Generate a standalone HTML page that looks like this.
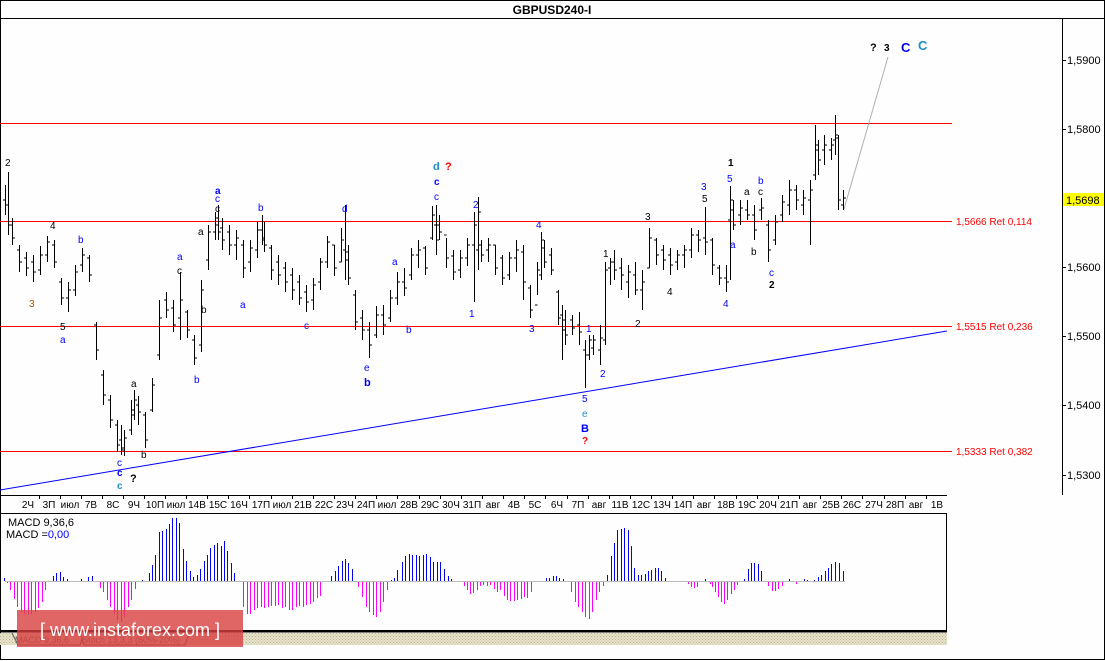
<!DOCTYPE html>
<html><head><meta charset="utf-8">
<style>
html,body{margin:0;padding:0;background:#fff;}
svg{display:block;font-family:"Liberation Sans","DejaVu Sans",sans-serif;}
text{font-size:10px;}
</style></head>
<body>
<svg width="1105" height="661" viewBox="0 0 1105 661" xmlns="http://www.w3.org/2000/svg">
<defs>
<pattern id="hatch" width="3" height="3" patternUnits="userSpaceOnUse">
<rect width="3" height="3" fill="#e6e2c8"/><rect width="1" height="1" fill="#b8b49a"/><rect x="1.5" y="1.5" width="1" height="1" fill="#c8c4aa"/>
</pattern>
</defs>
<rect x="0" y="0" width="1105" height="661" fill="#fff"/>
<rect x="0.5" y="0.5" width="1104" height="659" fill="#fefefe" stroke="#000"/>
<line x1="0" y1="18.5" x2="1105" y2="18.5" stroke="#000"/>
<text x="552" y="14" text-anchor="middle" style="font-size:12px;font-weight:bold" fill="#000">GBPUSD240-I</text>
<line x1="1062.5" y1="18" x2="1062.5" y2="495" stroke="#000"/>
<g stroke="#000">
<line x1="1062" y1="60.5" x2="1066" y2="60.5"/><line x1="1062" y1="129.5" x2="1066" y2="129.5"/><line x1="1062" y1="267.5" x2="1066" y2="267.5"/><line x1="1062" y1="336.5" x2="1066" y2="336.5"/><line x1="1062" y1="405.5" x2="1066" y2="405.5"/><line x1="1062" y1="475.5" x2="1066" y2="475.5"/>
</g>
<g fill="#000" style="font-size:11px">
<text x="1067" y="64" style="font-size:11px">1,5900</text>
<text x="1067" y="133" style="font-size:11px">1,5800</text>
<text x="1067" y="271" style="font-size:11px">1,5600</text>
<text x="1067" y="340" style="font-size:11px">1,5500</text>
<text x="1067" y="409" style="font-size:11px">1,5400</text>
<text x="1067" y="479" style="font-size:11px">1,5300</text>
</g>
<rect x="1063" y="193" width="41" height="13" fill="#ffff00"/>
<text x="1066" y="204" style="font-size:11px" fill="#000">1,5698</text>
<g stroke="#ff0000" stroke-width="1">
<line x1="0" y1="123.5" x2="952" y2="123.5"/>
<line x1="0" y1="221.5" x2="952" y2="221.5"/>
<line x1="0" y1="326.5" x2="952" y2="326.5"/>
<line x1="0" y1="451.5" x2="952" y2="451.5"/>
</g>
<g fill="#ff0000">
<text x="956" y="225">1,5666 Ret 0,114</text>
<text x="956" y="330">1,5515 Ret 0,236</text>
<text x="956" y="455">1,5333 Ret 0,382</text>
</g>
<line x1="0" y1="490" x2="947" y2="331" stroke="#0000ff" stroke-width="1"/>
<line x1="844" y1="209" x2="888" y2="57" stroke="#b0b0b0" stroke-width="1"/>
<path stroke="#000" stroke-width="1" fill="none" d="
M5.5 185V215M3 200H5.5M5.5 205H8
M8.5 172V235M6 205H8.5M8.5 225H11
M12.5 218V245M10 225H12.5M12.5 238H15
M19.5 245V272M17 250H19.5M19.5 262H22
M26.5 252V276M24 258H26.5M26.5 268H29
M33.5 255V282M31 262H33.5M33.5 272H36
M40.5 246V275M38 270H40.5M40.5 255H43
M47.5 236V262M45 255H47.5M47.5 242H50
M54.5 240V268M52 245H54.5M54.5 262H57
M61.5 278V305M59 282H61.5M61.5 298H64
M68.5 282V312M66 298H68.5M68.5 290H71
M75.5 265V296M73 290H75.5M75.5 272H78
M82.5 248V272M80 265H82.5M82.5 255H85
M89.5 255V282M87 258H89.5M89.5 275H92
M96.5 322V360M94 325H96.5M96.5 350H99
M103.5 370V405M101 375H103.5M103.5 395H106
M110.5 395V428M108 400H110.5M110.5 420H113
M117.5 420V452M115 425H117.5M117.5 445H120
M121.5 425V455M119 440H121.5M121.5 448H124
M124.5 430V456M122 450H124.5M124.5 438H127
M131.5 400V435M129 430H131.5M131.5 410H134
M134.5 390V420M132 415H134.5M134.5 400H137
M138.5 396V425M136 405H138.5M138.5 412H141
M145.5 412V448M143 415H145.5M145.5 440H148
M152.5 378V412M150 410H152.5M152.5 385H155
M159.5 300V360M157 355H159.5M159.5 318H162
M166.5 292V318M164 300H166.5M166.5 310H169
M173.5 300V332M171 308H173.5M173.5 325H176
M180.5 272V340M178 318H180.5M180.5 300H183
M187.5 310V338M185 312H187.5M187.5 330H190
M194.5 335V365M192 340H194.5M194.5 358H197
M201.5 280V352M199 345H201.5M201.5 290H204
M208.5 225V270M206 260H208.5M208.5 232H211
M215.5 212V240M213 232H215.5M215.5 218H218
M218.5 205V240M216 225H218.5M218.5 232H221
M222.5 218V250M220 228H222.5M222.5 240H225
M229.5 225V255M227 232H229.5M229.5 245H232
M236.5 230V260M234 245H236.5M236.5 238H239
M243.5 240V278M241 245H243.5M243.5 268H246
M250.5 240V272M248 262H250.5M250.5 248H253
M257.5 222V258M255 250H257.5M257.5 230H260
M262.5 215V245M260 230H262.5M262.5 238H265
M264.5 222V252M262 240H264.5M264.5 245H267
M271.5 245V280M269 248H271.5M271.5 270H274
M278.5 255V285M276 262H278.5M278.5 275H281
M285.5 262V292M283 268H285.5M285.5 282H288
M292.5 268V300M290 275H292.5M292.5 290H295
M299.5 275V305M297 282H299.5M299.5 298H302
M306.5 285V312M304 292H306.5M306.5 302H309
M313.5 278V310M311 300H313.5M313.5 285H316
M320.5 258V290M318 282H320.5M320.5 262H323
M327.5 236V268M325 262H327.5M327.5 242H330
M334.5 245V276M332 245H334.5M334.5 268H337
M341.5 228V262M339 262H341.5M341.5 240H344
M345.5 205V280M343 250H345.5M345.5 260H348
M348.5 245V285M346 252H348.5M348.5 278H351
M355.5 290V330M353 295H355.5M355.5 322H358
M362.5 310V340M360 318H362.5M362.5 330H365
M369.5 322V358M367 330H369.5M369.5 345H372
M376.5 306V338M374 335H376.5M376.5 315H379
M383.5 305V335M381 315H383.5M383.5 325H386
M390.5 290V322M388 318H390.5M390.5 298H393
M397.5 272V305M395 298H397.5M397.5 282H400
M404.5 268V296M402 282H404.5M404.5 288H407
M411.5 248V280M409 275H411.5M411.5 255H414
M418.5 240V268M416 255H418.5M418.5 250H421
M425.5 246V275M423 248H425.5M425.5 268H428
M432.5 206V240M430 238H432.5M432.5 215H435
M436.5 205V255M434 225H436.5M436.5 240H439
M439.5 215V240M437 225H439.5M439.5 232H442
M446.5 238V268M444 235H446.5M446.5 258H449
M453.5 250V280M451 256H453.5M453.5 272H456
M460.5 250V278M458 270H460.5M460.5 258H463
M467.5 238V266M465 258H467.5M467.5 245H470
M474.5 212V302M472 245H474.5M474.5 225H477
M478.5 197V270M476 250H478.5M478.5 212H481
M481.5 240V262M479 245H481.5M481.5 255H484
M488.5 238V262M486 250H488.5M488.5 245H491
M495.5 245V275M493 245H495.5M495.5 268H498
M502.5 255V285M500 258H502.5M502.5 278H505
M509.5 252V280M507 275H509.5M509.5 258H512
M516.5 240V272M514 258H516.5M516.5 250H519
M523.5 245V300M521 252H523.5M523.5 282H526
M530.5 285V318M528 288H530.5M530.5 310H533
M537.5 262V295M535 305H537.5M537.5 270H540
M541.5 232V280M539 275H541.5M541.5 240H544
M544.5 240V268M542 248H544.5M544.5 262H547
M551.5 248V275M549 255H551.5M551.5 270H554
M558.5 290V325M556 292H558.5M558.5 318H561
M562.5 305V360M560 315H562.5M562.5 330H565
M565.5 310V345M563 320H565.5M565.5 335H568
M572.5 315V335M570 320H572.5M572.5 328H575
M579.5 312V345M577 325H579.5M579.5 332H582
M585.5 340V388M583 350H585.5M585.5 355H588
M589.5 335V360M587 355H589.5M589.5 340H592
M593.5 335V355M591 348H593.5M593.5 340H596
M600.5 325V365M598 350H600.5M600.5 338H603
M605.5 262V345M603 340H605.5M605.5 270H608
M610.5 258V285M608 268H610.5M610.5 262H613
M614.5 250V280M612 262H614.5M614.5 270H617
M621.5 258V290M619 268H621.5M621.5 275H624
M628.5 265V298M626 282H628.5M628.5 272H631
M635.5 262V295M633 275H635.5M635.5 290H638
M642.5 270V310M640 290H642.5M642.5 282H645
M649.5 228V268M647 268H649.5M649.5 238H652
M656.5 238V265M654 240H656.5M656.5 255H659
M663.5 245V270M661 250H663.5M663.5 260H666
M670.5 248V275M668 255H670.5M670.5 265H673
M677.5 250V270M675 262H677.5M677.5 255H680
M684.5 245V268M682 255H684.5M684.5 250H687
M691.5 228V258M689 250H691.5M691.5 235H694
M698.5 230V252M696 235H698.5M698.5 240H701
M705.5 207V255M703 238H705.5M705.5 242H708
M712.5 238V275M710 240H712.5M712.5 265H715
M719.5 265V285M717 268H719.5M719.5 278H722
M726.5 265V292M724 278H726.5M726.5 282H729
M730.5 186V280M728 220H730.5M730.5 200H733
M733.5 200V230M731 210H733.5M733.5 225H736
M740.5 200V225M738 215H740.5M740.5 208H743
M747.5 200V220M745 210H747.5M747.5 215H750
M754.5 205V240M752 215H754.5M754.5 230H757
M761.5 198V220M759 210H761.5M761.5 208H764
M768.5 220V262M766 225H768.5M768.5 250H771
M775.5 215V245M773 240H775.5M775.5 222H778
M782.5 195V222M780 215H782.5M782.5 202H785
M789.5 180V215M787 205H789.5M789.5 190H792
M796.5 185V210M794 190H796.5M796.5 200H799
M803.5 190V215M801 205H803.5M803.5 198H806
M810.5 180V245M808 200H810.5M810.5 190H813
M815.5 125V180M813 175H815.5M815.5 145H818
M818.5 140V175M816 150H818.5M818.5 160H821
M824.5 135V165M822 150H824.5M824.5 145H827
M831.5 138V160M829 150H831.5M831.5 145H834
M835.5 115V155M833 140H835.5M835.5 135H838
M838.5 135V210M836 138H838.5M838.5 200H841
M843.5 190V210M841 205H843.5M843.5 198H846
"/>
<g style="font-size:10px">
<text x="5" y="166" fill="#000">2</text>
<text x="50" y="229" fill="#000">4</text>
<text x="78" y="243" fill="#0000ff">b</text>
<text x="198" y="235" fill="#000">a</text>
<text x="215" y="212" fill="#000">c</text>
<text x="215" y="202" fill="#0000ff">c</text>
<text x="215" y="194" fill="#0000ff" font-weight="bold">a</text>
<text x="258" y="211" fill="#0000ff">b</text>
<text x="342" y="212" fill="#0000ff">d</text>
<text x="29" y="307" fill="#aa5500">3</text>
<text x="60" y="330" fill="#000">5</text>
<text x="60" y="343" fill="#0000ff">a</text>
<text x="131" y="387" fill="#000">a</text>
<text x="117" y="466" fill="#0000ff">c</text>
<text x="117" y="476" fill="#0000ff" font-weight="bold">c</text>
<text x="117" y="489" fill="#1e90c8" font-weight="bold">c</text>
<text x="130" y="482" fill="#000" font-weight="bold" style="font-size:11px">?</text>
<text x="141" y="458" fill="#000">b</text>
<text x="194" y="383" fill="#0000ff">b</text>
<text x="177" y="260" fill="#0000ff">a</text>
<text x="177" y="274" fill="#000">c</text>
<text x="201" y="313" fill="#000">b</text>
<text x="240" y="308" fill="#0000ff">a</text>
<text x="304" y="329" fill="#0000ff">c</text>
<text x="433" y="170" fill="#1e90c8" font-weight="bold" style="font-size:11px">d</text>
<text x="445" y="170" fill="#ff0000" font-weight="bold" style="font-size:11px">?</text>
<text x="434" y="185" fill="#0000ff" font-weight="bold">c</text>
<text x="434" y="200" fill="#0000ff">c</text>
<text x="473" y="208" fill="#0000ff">2</text>
<text x="536" y="228" fill="#0000ff">4</text>
<text x="392" y="265" fill="#0000ff">a</text>
<text x="406" y="333" fill="#0000ff">b</text>
<text x="364" y="371" fill="#0000ff">e</text>
<text x="364" y="386" fill="#0000ff" font-weight="bold" style="font-size:11px">b</text>
<text x="469" y="317" fill="#0000ff">1</text>
<text x="529" y="332" fill="#0000ff">3</text>
<text x="586" y="332" fill="#0000ff">1</text>
<text x="603" y="257" fill="#000">1</text>
<text x="600" y="377" fill="#0000ff">2</text>
<text x="582" y="402" fill="#0000ff">5</text>
<text x="582" y="417" fill="#1e90c8">e</text>
<text x="581" y="432" fill="#0000ff" font-weight="bold" style="font-size:11px">B</text>
<text x="582" y="444" fill="#ff0000" font-weight="bold">?</text>
<text x="645" y="220" fill="#000">3</text>
<text x="635" y="327" fill="#000">2</text>
<text x="667" y="295" fill="#000">4</text>
<text x="701" y="190" fill="#0000ff">3</text>
<text x="702" y="202" fill="#000">5</text>
<text x="728" y="166" fill="#000" font-weight="bold">1</text>
<text x="727" y="182" fill="#0000ff">5</text>
<text x="744" y="195" fill="#000">a</text>
<text x="758" y="184" fill="#0000ff">b</text>
<text x="758" y="195" fill="#000">c</text>
<text x="730" y="248" fill="#0000ff">a</text>
<text x="751" y="255" fill="#000">b</text>
<text x="723" y="307" fill="#0000ff">4</text>
<text x="769" y="276" fill="#0000ff">c</text>
<text x="769" y="288" fill="#000" font-weight="bold">2</text>
<text x="870" y="51" fill="#000" font-weight="bold" style="font-size:11px">?</text>
<text x="884" y="51" fill="#000" font-weight="bold">3</text>
<text x="901" y="52" fill="#0000ff" font-weight="bold" style="font-size:13px">C</text>
<text x="918" y="50" fill="#1e90c8" font-weight="bold" style="font-size:13px">C</text>
</g>
<line x1="0" y1="495.5" x2="947" y2="495.5" stroke="#000"/>
<path stroke="#000" d="M39.5 495V499M60.5 495V499M81.5 495V499M102.5 495V499M123.5 495V499M144.5 495V499M165.5 495V499M186.5 495V499M207.5 495V499M228.5 495V499M249.5 495V499M271.5 495V499M292.5 495V499M313.5 495V499M334.5 495V499M355.5 495V499M376.5 495V499M397.5 495V499M419.5 495V499M440.5 495V499M461.5 495V499M482.5 495V499M503.5 495V499M524.5 495V499M545.5 495V499M567.5 495V499M588.5 495V499M609.5 495V499M630.5 495V499M651.5 495V499M672.5 495V499M693.5 495V499M714.5 495V499M736.5 495V499M757.5 495V499M778.5 495V499M799.5 495V499M820.5 495V499M841.5 495V499M862.5 495V499M884.5 495V499M905.5 495V499M926.5 495V499"/>
<g fill="#000" text-anchor="middle" style="font-size:10px">
<text x="28" y="508">2Ч</text><text x="49" y="508">3П</text><text x="70" y="508">июл</text><text x="91" y="508">7В</text><text x="113" y="508">8С</text><text x="134" y="508">9Ч</text><text x="155" y="508">10П</text><text x="176" y="508">июл</text><text x="197" y="508">14В</text><text x="218" y="508">15С</text><text x="239" y="508">16Ч</text><text x="261" y="508">17П</text><text x="282" y="508">июл</text><text x="303" y="508">21В</text><text x="324" y="508">22С</text><text x="345" y="508">23Ч</text><text x="366" y="508">24П</text><text x="387" y="508">июл</text><text x="409" y="508">28В</text><text x="430" y="508">29С</text><text x="451" y="508">30Ч</text><text x="472" y="508">31П</text><text x="493" y="508">авг</text><text x="514" y="508">4В</text><text x="535" y="508">5С</text><text x="557" y="508">6Ч</text><text x="578" y="508">7П</text><text x="599" y="508">авг</text><text x="620" y="508">11В</text><text x="641" y="508">12С</text><text x="662" y="508">13Ч</text><text x="683" y="508">14П</text><text x="704" y="508">авг</text><text x="726" y="508">18В</text><text x="747" y="508">19С</text><text x="768" y="508">20Ч</text><text x="789" y="508">21П</text><text x="810" y="508">авг</text><text x="831" y="508">25В</text><text x="852" y="508">26С</text><text x="874" y="508">27Ч</text><text x="895" y="508">28П</text><text x="916" y="508">авг</text><text x="937" y="508">1В</text>
</g>
<rect x="0.5" y="513.5" width="946" height="117" fill="#fefefe" stroke="#000"/>
<line x1="5" y1="581.5" x2="845" y2="581.5" stroke="#bbb"/>
<path stroke="#0000ff" fill="none" d="M4.5 581V578M53.5 581V576M56.5 581V573M60.5 581V572M63.5 581V577M67.5 581V579M81.5 581V579M88.5 581V577M92.5 581V576M142.5 581V580M149.5 581V573M152.5 581V565M155.5 581V555M159.5 581V532M162.5 581V531M166.5 581V529M169.5 581V524M172.5 581V518M176.5 581V518M179.5 581V523M183.5 581V549M186.5 581V561M190.5 581V571M193.5 581V577M197.5 581V575M200.5 581V569M204.5 581V561M207.5 581V555M210.5 581V548M214.5 581V545M217.5 581V543M221.5 581V546M224.5 581V541M227.5 581V551M231.5 581V563M234.5 581V573M331.5 581V576M335.5 581V571M338.5 581V566M342.5 581V561M345.5 581V559M348.5 581V563M352.5 581V569M391.5 581V580M394.5 581V578M397.5 581V570M402.5 581V562M405.5 581V556M409.5 581V554M412.5 581V555M416.5 581V555M419.5 581V556M423.5 581V555M426.5 581V554M430.5 581V557M433.5 581V562M437.5 581V562M440.5 581V562M444.5 581V569M448.5 581V576M451.5 581V579M546.5 581V578M549.5 581V578M553.5 581V576M556.5 581V576M559.5 581V578M563.5 581V579M607.5 581V575M611.5 581V556M614.5 581V543M617.5 581V530M621.5 581V529M624.5 581V528M628.5 581V530M631.5 581V546M634.5 581V568M638.5 581V575M641.5 581V575M645.5 581V574M648.5 581V571M651.5 581V570M655.5 581V568M658.5 581V568M661.5 581V571M665.5 581V578M705.5 581V579M744.5 581V579M748.5 581V569M751.5 581V563M754.5 581V563M758.5 581V564M761.5 581V571M789.5 581V579M804.5 581V579M807.5 581V580M814.5 581V580M818.5 581V577M821.5 581V575M825.5 581V571M828.5 581V568M831.5 581V564M835.5 581V562M839.5 581V563M843.5 581V571"/>
<path stroke="#ff00ff" fill="none" d="M7.5 582V583M10.5 582V590M14.5 582V599M17.5 582V607M21.5 582V612M24.5 582V614M28.5 582V615M31.5 582V614M35.5 582V612M38.5 582V608M42.5 582V602M45.5 582V590M100.5 582V588M103.5 582V592M107.5 582V600M110.5 582V607M114.5 582V614M117.5 582V620M121.5 582V622M124.5 582V617M128.5 582V607M131.5 582V600M135.5 582V589M243.5 582V607M247.5 582V614M250.5 582V614M254.5 582V610M257.5 582V608M261.5 582V607M264.5 582V608M268.5 582V607M271.5 582V606M275.5 582V606M278.5 582V605M282.5 582V608M285.5 582V607M289.5 582V610M292.5 582V610M296.5 582V607M299.5 582V606M303.5 582V607M306.5 582V605M310.5 582V604M313.5 582V602M317.5 582V598M320.5 582V596M358.5 582V587M362.5 582V597M366.5 582V607M369.5 582V612M373.5 582V615M376.5 582V617M380.5 582V612M383.5 582V602M387.5 582V590M464.5 582V586M467.5 582V590M470.5 582V594M473.5 582V593M477.5 582V590M480.5 582V586M483.5 582V585M487.5 582V586M490.5 582V585M494.5 582V589M497.5 582V592M500.5 582V590M504.5 582V596M507.5 582V600M510.5 582V601M514.5 582V601M517.5 582V600M521.5 582V599M524.5 582V597M527.5 582V598M531.5 582V592M571.5 582V592M575.5 582V602M578.5 582V607M582.5 582V612M585.5 582V617M589.5 582V619M592.5 582V612M596.5 582V600M599.5 582V592M603.5 582V586M688.5 582V584M691.5 582V587M694.5 582V588M697.5 582V587M710.5 582V584M712.5 582V587M715.5 582V592M718.5 582V597M721.5 582V602M724.5 582V604M727.5 582V600M731.5 582V594M734.5 582V590M737.5 582V585M768.5 582V586M772.5 582V591M775.5 582V591M778.5 582V589M782.5 582V586M796.5 582V584"/>
<text x="8" y="526" fill="#000" style="font-size:11px">MACD 9,36,6</text>
<text x="6" y="538" fill="#000" style="font-size:11px">MACD =<tspan fill="#0000ff">0,00</tspan></text>
<line x1="0" y1="631.5" x2="947" y2="631.5" stroke="#000" stroke-width="2"/>
<rect x="0" y="633" width="947" height="12" fill="url(#hatch)"/>
<path d="M12 633 L18 645 L80 645 L84 633" fill="#e6e2c8" stroke="#555"/>
<path d="M80 633 L84 645 L185 645 L189 633" fill="#e6e2c8" stroke="#555"/>
<text x="15" y="643" fill="#666" style="font-size:9px">MACD 9,36,6</text>
<text x="82" y="643" fill="#666" style="font-size:9px">Stoch 13,3,3 (80%-20%)</text>
<rect x="17" y="610" width="226" height="37" fill="#d84040" fill-opacity="0.8"/>
<text x="130" y="636" text-anchor="middle" fill="#fff" style="font-size:18px">[ www.instaforex.com ]</text>
</svg>
</body></html>
